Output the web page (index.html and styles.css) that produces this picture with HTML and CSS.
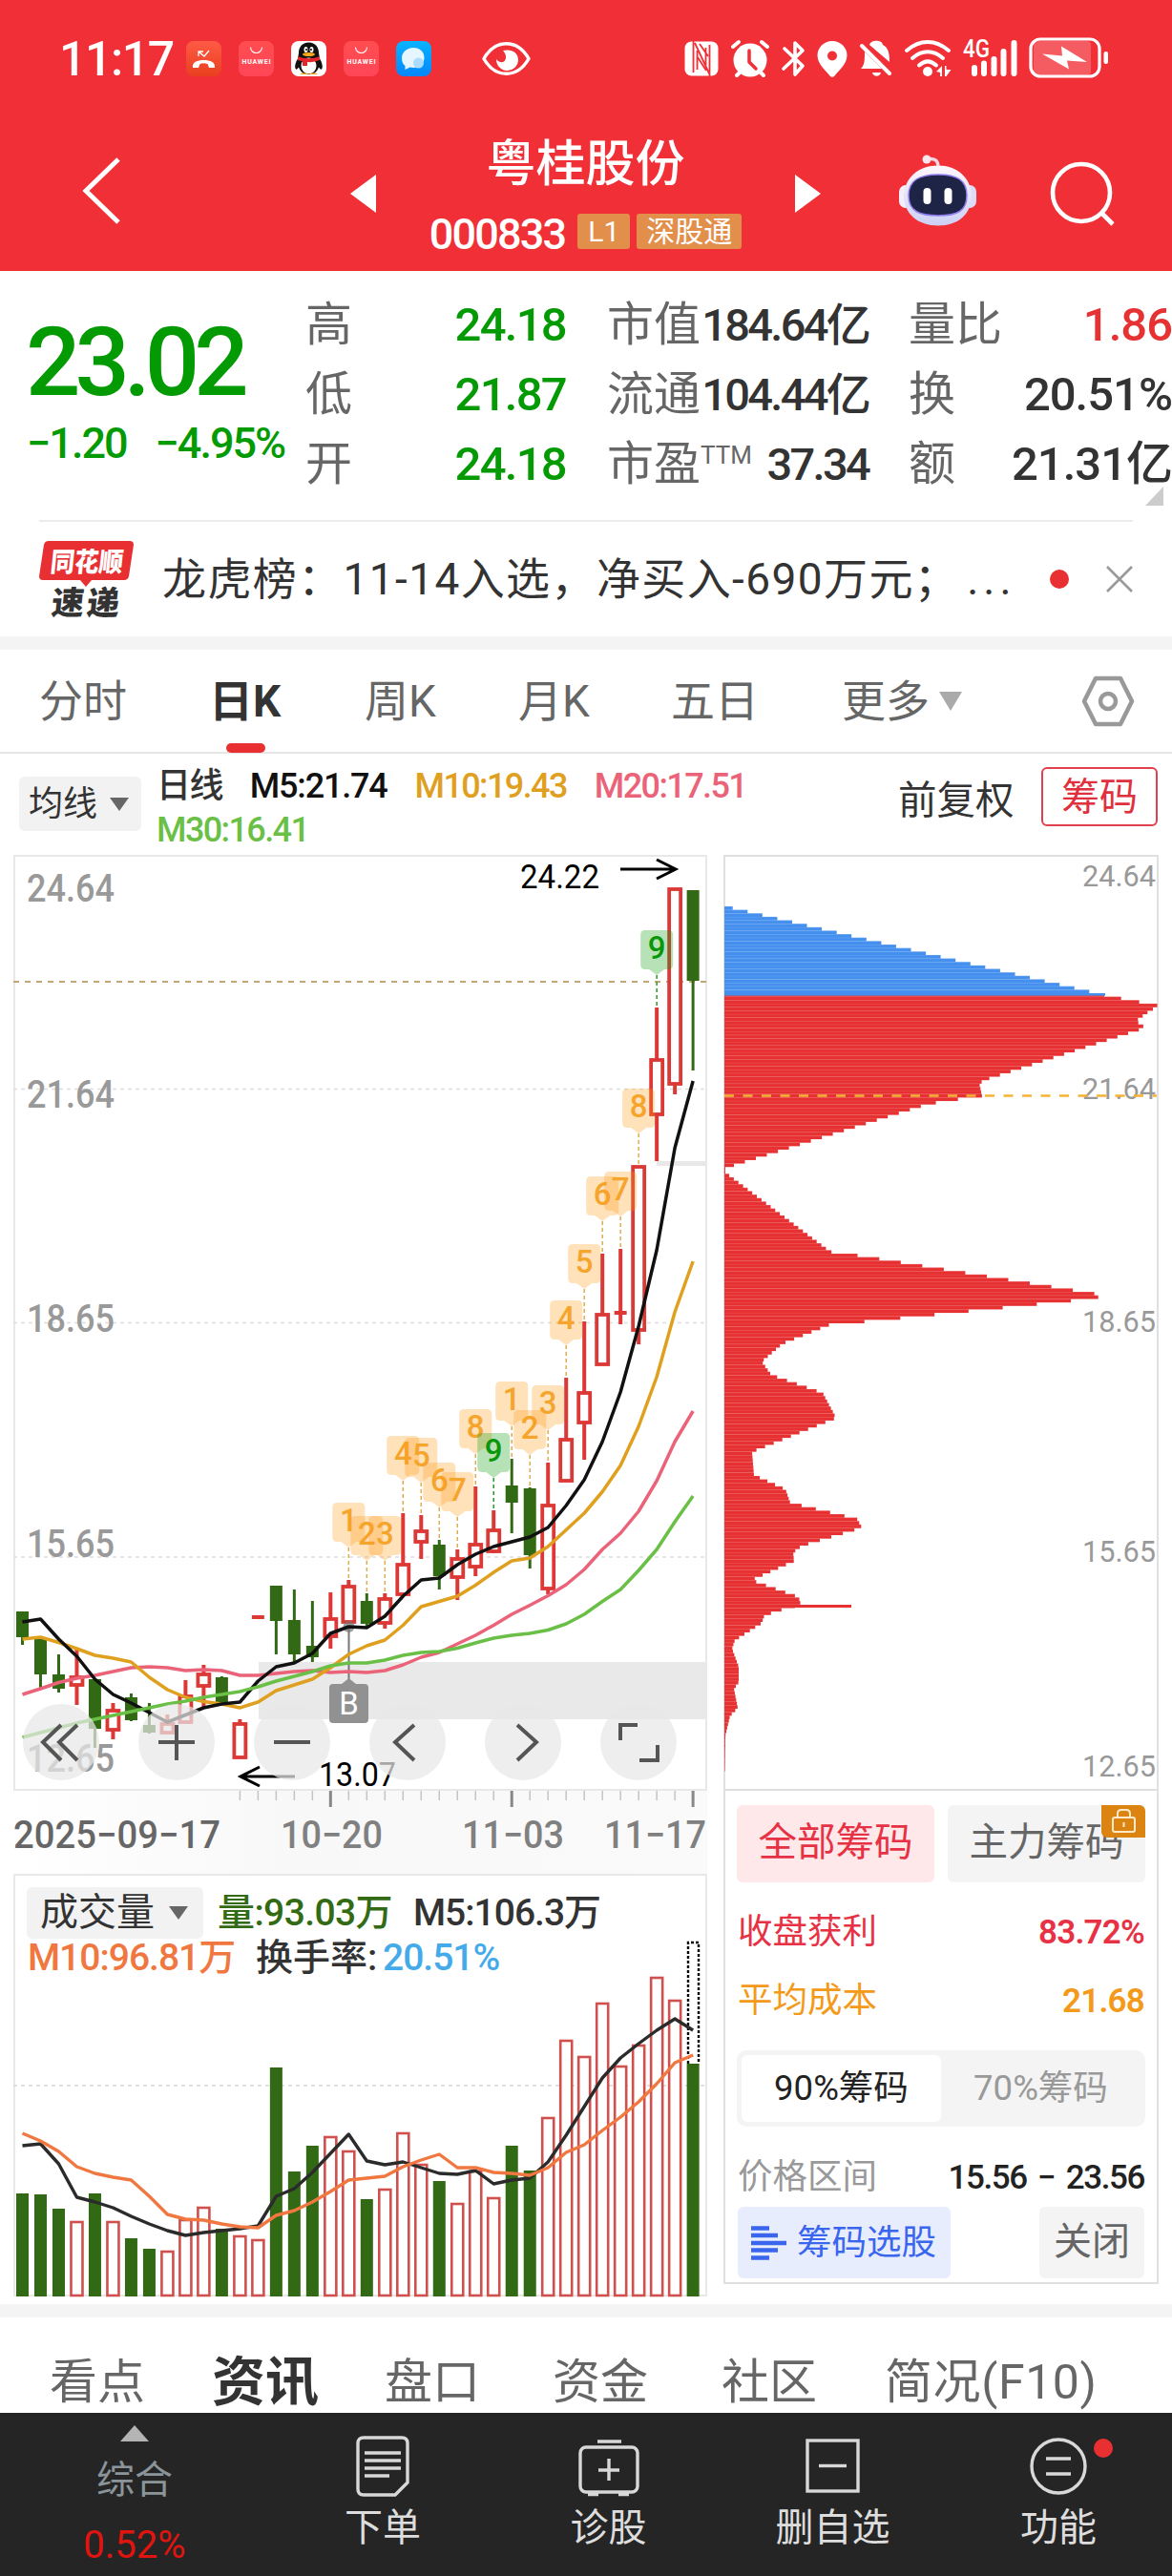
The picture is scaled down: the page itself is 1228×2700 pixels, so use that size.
FILE: index.html
```html
<!DOCTYPE html>
<html lang="zh-CN">
<head>
    <meta charset="UTF-8">
    <meta name="viewport" content="width=device-width, initial-scale=1.0">
    <title>粤桂股份 000833</title>
    <link rel="stylesheet" href="styles.css">
</head>
<body>
    <header class="header">
        <!-- Status bar -->
        <div class="status">
            <span class="clock">11:17</span>
            <svg class="status-left" width="362" height="60" viewBox="194 30 362 60">
                <defs>
                    <linearGradient id="gCall" x1="0" y1="0" x2="0" y2="1"><stop offset="0" stop-color="#ff5a45"/><stop offset="1" stop-color="#e8401f"/></linearGradient>
                    <linearGradient id="gShop" x1="0" y1="0" x2="0" y2="1"><stop offset="0" stop-color="#ff4d50"/><stop offset="1" stop-color="#ff4658"/></linearGradient>
                    <linearGradient id="gChat" x1="0" y1="0" x2="0" y2="1"><stop offset="0" stop-color="#08b4ff"/><stop offset="1" stop-color="#0586fb"/></linearGradient>
                </defs>
                <rect x="195" y="43" width="37" height="37" rx="8" fill="url(#gCall)"/>
                <path d="M202 71c-1-6 5-8 11.500-8s12.500 2 11.500 8h-6l-1.500-4c-3-1-6-1-8 0l-1.500 4z" fill="#fff"/>
                <path d="M208 59v-5h5M208 54l6 5 5-6" fill="none" stroke="#fff" stroke-width="1.300"/>
                <g id="shop">
                    <rect x="250" y="43" width="37" height="37" rx="8" fill="url(#gShop)"/>
                    <path d="M262.500 49.500a6 6 0 0 0 12 0" fill="none" stroke="#fff" stroke-width="1.100"/>
                    <text x="253.500" y="66.500" class="tiny" textLength="30">HUAWEI</text>
                </g>
                <use href="#shop" x="110"/>
                <rect x="305" y="43" width="37" height="37" rx="8" fill="#fff"/>
                <path d="M323.500 44.500c-7 0-10.500 5-10.500 11l-1 6c-3 5-3.500 9-2 11 1 .5 2-.5 3-2 2 5 5 7.500 10.500 7.500s8.500-2.500 10.500-7.500c1 1.500 2 2.500 3 2 1.500-2 1-6-2-11l-1-6c0-6-3.500-11-10.500-11z" fill="#111"/>
                <ellipse cx="323.500" cy="69" rx="8" ry="8.500" fill="#fff"/>
                <ellipse cx="320.500" cy="52" rx="2" ry="3" fill="#fff"/><ellipse cx="326.500" cy="52" rx="2" ry="3" fill="#fff"/>
                <circle cx="321" cy="52" r="1"/><circle cx="326" cy="52" r="1"/>
                <ellipse cx="323.500" cy="57" rx="6.500" ry="2" fill="#f7a81b"/>
                <path d="M312 59c7 3 16 3 23 0v4c-4 1.500-9 2.500-13 2v4h-5v-5c-3 0-5-1-5-1z" fill="#e4252b"/>
                <path d="M314 78a5 2.500 0 0 1 9 0zM324 78a5 2.500 0 0 1 9 0z" fill="#f7a81b"/>
                <rect x="415" y="43" width="37" height="37" rx="8" fill="url(#gChat)"/>
                <path d="M433 50c-7 0-12 5-12 11 0 4 1.500 6.500 3.500 8v4l5-2.500c10 2 15-4 15-10S440 50 433 50z" fill="#e6f6ff"/>
                <circle cx="438.500" cy="66" r="5.500" fill="#a9dcff"/>
                <path d="M507 61.500c12-21 35-21 47 0-12 21-35 21-47 0z" fill="none" stroke="#fff" stroke-width="3.500" stroke-linejoin="round"/>
                <path d="M527 53c9-2 16 2 16 10a11.500 11.500 0 0 1-23-1c4 5 9 4 10-1 .5-3-1-6-3-8z" fill="#fff"/>
            </svg>
            <svg class="status-right" width="450" height="60" viewBox="716 30 450 60" fill="#fff">
                <!-- NFC -->
                <rect x="717.500" y="43.500" width="35" height="36" rx="7"/>
                <path d="M726.500 43v33M743.500 47v33M728 45l15.500 33M730.500 53v20M739.500 50v20M731 60l9 14M733 46l9 13" fill="none" stroke="#f12f37" stroke-width="1.800"/>
                <!-- alarm -->
                <circle cx="786" cy="63" r="17.500"/>
                <path d="M768 49l6-5M804 49l-6-5M772 79l5-5M800 79l-5-5" stroke="#fff" stroke-width="4" stroke-linecap="round"/>
                <path d="M785 53v12l7 7" fill="none" stroke="#f12f37" stroke-width="3.500" stroke-linecap="round"/>
                <!-- bluetooth -->
                <path d="M822 51l19 18-8 9V45l8 8-20 19" fill="none" stroke="#fff" stroke-width="3.600" stroke-linecap="round" stroke-linejoin="round"/>
                <!-- location -->
                <path fill-rule="evenodd" d="M872 43c-9 0-15.500 7-15.500 15 0 9 8 15 13 21.500 1.500 1.800 3.500 1.800 5 0C879.500 73 887.500 67 887.500 58c0-8-6.500-15-15.500-15zm0 10.500a5 5 0 1 1 0 10 5 5 0 0 1 0-10z"/>
                <!-- muted bell -->
                <path d="M911 47c1-5 13-6 14 0 6 3 7 9 7 18zM906 54l18 18h-22c4-4 4-9 4-18zM914 76h9c-1 5-8 5-9 0z"/>
                <path d="M903 48l29 29" stroke="#fff" stroke-width="4" stroke-linecap="round"/>
                <!-- wifi -->
                <path d="M950 53c14-12 30-12 44 0M956 61c10-9 22-9 32 0M963 68.500c6-5.500 12-5.500 18 0" fill="none" stroke="#fff" stroke-width="4" stroke-linecap="round"/>
                <circle cx="972" cy="75" r="5"/>
                <path d="M981 75l6-6v11h-2v-4zM990 69h1.500v4h5l-5 7H990z"/>
                <!-- signal -->
                <text x="1009" y="60" class="net" textLength="28" lengthAdjust="spacingAndGlyphs">4G</text>
                <path d="M1021 71v6M1031 66.500v10.500M1041.500 62v15M1051.500 54v23M1062.500 45v32" stroke="#fff" stroke-width="6" stroke-linecap="round"/>
                <!-- battery -->
                <rect x="1083" y="43" width="60" height="36" rx="4" opacity=".22"/>
                <rect x="1080" y="41" width="72" height="39" rx="10" fill="none" stroke="#fff" stroke-width="3.200"/>
                <rect x="1156.500" y="54" width="4.500" height="13" rx="2"/>
                <path d="M1092 56.500l21 2-1-10 27 16.500-21-1.500 2 9z"/>
            </svg>
        </div>
        <!-- Title bar -->
        <div class="titlebar">
            <svg class="back" width="48" height="76" viewBox="0 0 48 76"><path d="M42 4L8 37l34 33" fill="none" stroke="#fff" stroke-width="5"/></svg>
            <svg class="prev" width="27" height="40" viewBox="0 0 27 40"><path d="M27 0v40L0 20z" fill="#fff"/></svg>
            <div class="stock">
                <h1>粤桂股份</h1>
                <div class="code"><span>000833</span><em class="l1">L1</em><em>深股通</em></div>
            </div>
            <svg class="next" width="27" height="40" viewBox="0 0 27 40"><path d="M0 0v40l27-20z" fill="#fff"/></svg>
            <svg class="robot" width="84" height="78" viewBox="940 160 84 78">
                <defs>
                    <linearGradient id="gBot" x1="0" y1="0" x2="0" y2="1"><stop offset="0" stop-color="#fdf7fc"/><stop offset="1" stop-color="#cdd0f4"/></linearGradient>
                </defs>
                <path d="M971 167c8-2 12 1 12 8" fill="none" stroke="#f6d6e2" stroke-width="3.500"/>
                <circle cx="971" cy="167" r="4.500" fill="#fbe6ee"/>
                <rect x="942" y="194" width="14" height="24" rx="7" fill="#f3f0fb"/><rect x="1009" y="194" width="14" height="24" rx="7" fill="#dcdcf8"/>
                <path d="M983 173.500c20 0 34 13 35 31 0 20-14 32-35 32s-36-12-36-32c1-18 15-31 36-31z" fill="url(#gBot)"/>
                <path d="M983 183c20 0 30 6 30 22s-10 21-30 21-31-5-31-21 11-22 31-22z" fill="#1e2446" stroke="#8f7bf0" stroke-width="1.500"/>
                <rect x="967.500" y="197" width="8" height="17" rx="4" fill="#fff"/><rect x="989.500" y="197" width="8" height="17" rx="4" fill="#fff"/>
            </svg>
            <svg class="search" width="70" height="70" viewBox="0 0 70 70"><g fill="none" stroke="#fff" stroke-width="4.600"><circle cx="33" cy="33" r="30"/><path d="M54 54l12 12"/></g></svg>
        </div>
    </header>

    <!-- Quote -->
    <section class="quote">
        <div class="price">
            <strong>23.02</strong>
            <div class="change"><span>−1.20</span><span class="pct">−4.95%</span></div>
        </div>
        <dl class="q1">
            <dt>高</dt><dd class="green">24.18</dd>
            <dt>低</dt><dd class="green">21.87</dd>
            <dt>开</dt><dd class="green">24.18</dd>
        </dl>
        <dl class="q2">
            <dt>市值</dt><dd>184.64亿</dd>
            <dt>流通</dt><dd>104.44亿</dd>
            <dt>市盈<sup>TTM</sup></dt><dd>37.34</dd>
        </dl>
        <dl class="q3">
            <dt>量比</dt><dd class="red">1.86</dd>
            <dt>换</dt><dd>20.51%</dd>
            <dt>额</dt><dd>21.31亿</dd>
        </dl>
        <i class="corner"></i>
    </section>

    <!-- News strip -->
    <section class="news">
        <svg width="100" height="82" viewBox="42 564 100 82">
            <path d="M52 565h85q4 0 4 4l-5 33q-1 4-5 4h-34l-6 7-6-7H46q-4 0-4-4l5-33q1-4 5-4z" fill="#e83033"/>
            <text x="0" y="0" class="logo-top" transform="translate(53 597) skewX(-6)" textLength="76" lengthAdjust="spacingAndGlyphs">同花顺</text>
            <text x="0" y="0" class="logo-bottom" transform="translate(54 642) skewX(-6)" textLength="71">速递</text>
        </svg>
        <p>龙虎榜：11-14入选，净买入-690万元；<span>...</span></p>
        <i class="dot"></i>
        <svg class="close" width="28" height="28" viewBox="0 0 28 28"><path d="M1 1l26 26M27 1L1 27" stroke="#999" stroke-width="2.600"/></svg>
    </section>

    <!-- Period tabs -->
    <nav class="periods">
        <a>分时</a><a class="active">日K</a><a>周K</a><a>月K</a><a>五日</a><a>更多<i class="down"></i></a>
        <svg width="56" height="54" viewBox="0 0 56 54"><g fill="none" stroke="#999" stroke-width="4.500"><path d="M15 3h26l12 24-12 24H15L3 27z" stroke-linejoin="round"/><circle cx="28" cy="27" r="8"/></g></svg>
    </nav>

    <!-- Moving averages -->
    <div class="averages">
        <span class="select">均线<i class="down"></i></span>
        <div class="values">
            <span>日线</span><span class="m5">M5:21.74</span><span class="m10">M10:19.43</span><span class="m20">M20:17.51</span><br><span class="m30">M30:16.41</span>
        </div>
        <span class="adjust">前复权</span>
        <span class="chips-btn">筹码</span>
    </div>

    <main class="charts">
        <div class="left">
            <div class="kline">
                <svg id="kline" width="727" height="1068" viewBox="14 896 727 1068"></svg>
                <div class="controls">
                    <button><svg viewBox="0 0 80 80"><path d="M40 22L21 40l19 19M57 22L38 40l19 19"/></svg></button>
                    <button><svg viewBox="0 0 80 80"><path d="M21 40h38M40 22v37"/></svg></button>
                    <button><svg viewBox="0 0 80 80"><path d="M21 40h38"/></svg></button>
                    <button><svg viewBox="0 0 80 80"><path d="M47 22L27 40l20 19"/></svg></button>
                    <button><svg viewBox="0 0 80 80"><path d="M34 22l20 18-20 19"/></svg></button>
                    <button><svg viewBox="0 0 80 80"><path d="M21 38V22h18M60 43v16H41"/></svg></button>
                </div>
            </div>
            <div class="volume">
                <svg id="volume" width="727" height="443" viewBox="14 1964 727 443"></svg>
                <div class="legend">
                    <div><span class="select">成交量<i class="down"></i></span><span class="vol">量:93.03万</span><span class="v5">M5:106.3万</span></div>
                    <div><span class="v10">M10:96.81万</span><span class="rate">换手率:</span><span class="blue">20.51%</span></div>
                </div>
            </div>
        </div>

        <aside class="chips">
            <svg id="chips" width="456" height="979" viewBox="758 896 456 979"></svg>
            <div class="chips-info">
                <div class="pair">
                    <span class="on">全部筹码</span>
                    <span>主力筹码
                        <svg class="lock" width="46" height="34" viewBox="0 0 46 34"><g fill="none" stroke="#fde9c8" stroke-width="2"><rect x="12" y="13" width="23" height="15" rx="2"/><path d="M17 13V9q0-4 4-4h5q4 0 4 4v4M23.500 18v5"/></g></svg>
                    </span>
                </div>
                <div class="row r1"><span>收盘获利</span><b>83.72%</b></div>
                <div class="row r2"><span>平均成本</span><b>21.68</b></div>
                <div class="segment"><span class="on">90%筹码</span><span>70%筹码</span></div>
                <div class="row r3"><span>价格区间</span><b>15.56 − 23.56</b></div>
                <div class="foot">
                    <span class="pick"><svg width="38" height="36" viewBox="0 0 38 36"><path d="M0 2.500h19M0 10h28M0 18h37M0 25.500h28M0 33.500h19" stroke="#3a66ee" stroke-width="4.600"/></svg>筹码选股</span>
                    <span class="shut">关闭</span>
                </div>
            </div>
        </aside>
    </main>

    <!-- Content tabs -->
    <nav class="sections">
        <a>看点</a><a class="active">资讯</a><a>盘口</a><a>资金</a><a>社区</a><a class="last">简况(F10)</a>
    </nav>

    <!-- Bottom bar -->
    <footer class="bottom">
        <div class="index"><i class="up"></i><span>综合</span><b>0.52%</b></div>
        <div>
            <svg width="64" height="64" viewBox="0 0 64 64"><g><path d="M12 2h40q6 0 6 6v41L45 62H12q-6 0-6-6V8q0-6 6-6z"/><path d="M13 18h38M13 26h38M13 34h38M13 42h26"/></g></svg>
            <span>下单</span>
        </div>
        <div>
            <svg width="64" height="64" viewBox="0 0 64 64"><g><rect x="2" y="12" width="60" height="47" rx="6"/><path d="M20 6h25M32 24v23M21 36h22M10 61.500h11M42 61.500h11"/></g></svg>
            <span>诊股</span>
        </div>
        <div>
            <svg width="64" height="64" viewBox="0 0 64 64"><g><rect x="5" y="5" width="53" height="53"/><path d="M17 31.500h29"/></g></svg>
            <span>删自选</span>
        </div>
        <div class="more">
            <svg width="64" height="64" viewBox="0 0 64 64"><g><circle cx="32" cy="32" r="28"/><path d="M19 24h26M19 40h26"/></g></svg>
            <span>功能</span>
            <i class="dot"></i>
        </div>
    </footer>
    <script src="charts.js"></script>
</body>
</html>
```

FILE: styles.css
```css
* {
    box-sizing: border-box;
}
body {
    margin: 0;
    width: 1228px;
    height: 2700px;
    overflow: hidden;
    background: #fff;
    color: #333;
    font-family: Roboto, "Noto Sans CJK SC", sans-serif;
    line-height: 1;
}
h1, p, dl, dd, dt {
    margin: 0;
    font-weight: 400;
}
em, i {
    font-style: normal;
}
svg {
    display: block;
    overflow: visible;
}
.green { color: #049a04; }
.red { color: #e63232; }
.blue { color: #45aaea; }

/* triangles */
.down {
    display: inline-block;
    border: 10px solid transparent;
    border-top: 14px solid #666;
    border-bottom: 0;
}

/* header */
.header {
    height: 284px;
    background: #f12f37;
    color: #fff;
}
.status {
    display: flex;
    height: 90px;
    padding: 30px 62px 0 62px;
}
.clock {
    width: 132px;
    padding-top: 7px;
    font-size: 50px;
    font-weight: 500;
    letter-spacing: -1.400px;
}
.status-right {
    margin-left: auto;
}
.tiny {
    font-size: 7px;
    font-weight: 700;
    fill: #fff;
}
.net {
    font-size: 25px;
    font-weight: 500;
}
.titlebar {
    display: flex;
    height: 194px;
}
.titlebar svg {
    flex: none;
}
.back {
    margin: 73px 0 0 82px;
}
.prev {
    margin: 93px 0 0 237px;
}
.stock {
    width: 439px;
    padding-top: 57px;
    text-align: center;
}
.stock h1 {
    font-size: 52px;
    font-weight: 500;
}
.code {
    display: flex;
    justify-content: center;
    gap: 7px;
    margin: 24px 0 0 0;
    font-size: 45px;
    font-weight: 500;
}
.code span {
    margin-right: 6px;
    letter-spacing: -1.800px;
}
.code em {
    height: 37px;
    margin-top: 1px;
    padding: 2px 10px;
    border-radius: 3px;
    background: #e38f4c;
    font-size: 30px;
    font-weight: 400;
    line-height: 34px;
}
.code .l1 {
    padding: 2px 11px;
}
.next {
    margin: 93px 0 0 0;
}
.robot {
    margin: 70px 0 0 80px;
}
.search {
    margin: 79px 0 0 76px;
}

/* quote */
.quote {
    position: relative;
    display: flex;
    height: 261px;
    padding: 20px 0 0 31px;
}
.price {
    width: 289px;
    color: #049a04;
}
.price strong {
    display: block;
    margin: 25px 0 0 -4px;
    font-size: 101px;
    font-weight: 500;
    letter-spacing: -6px;
}
.change {
    display: flex;
    margin: 12px 0 0 -3px;
    font-size: 45px;
    font-weight: 500;
    letter-spacing: -2px;
}
.pct {
    margin-left: 30px;
}
.quote dl {
    display: grid;
    grid-template-columns: 96px 1fr;
    grid-auto-rows: 73px;
    align-items: center;
    font-size: 49px;
}
.quote dt {
    color: #666;
    white-space: nowrap;
}
.quote dd {
    font-size: 49px;
    font-weight: 500;
    text-align: right;
    letter-spacing: -1.700px;
    white-space: nowrap;
}
.q1 {
    width: 273px;
}
.q2 {
    width: 274px;
    margin-left: 43px;
}
.q3 {
    width: 276px;
    margin-left: 42px;
}
.quote .q2 dd {
    font-size: 47px;
    letter-spacing: -2.700px;
}
.quote .q3 dd {
    letter-spacing: -1px;
}
.quote sup {
    font-size: 26px;
    vertical-align: 17px;
    line-height: 0;
}
.corner {
    position: absolute;
    right: 9px;
    bottom: 15px;
    border-left: 19px solid transparent;
    border-bottom: 20px solid #ccc;
}

/* news */
.news {
    display: flex;
    align-items: center;
    height: 122px;
    margin: 0 41px;
    border-top: 2px solid #ececec;
}
.news p {
    width: 913px;
    margin-left: 29px;
    font-size: 46px;
    letter-spacing: 1.400px;
    white-space: nowrap;
}
.news p span {
    margin-left: 8px;
    letter-spacing: 5px;
}
.news .dot {
    margin-left: 17px;
}
.news .close {
    margin-left: auto;
}
.dot {
    width: 20px;
    height: 20px;
    border-radius: 50%;
    background: #e83033;
}
.logo-top {
    font-size: 28px;
    font-weight: 900;
    fill: #fff;
}
.logo-bottom {
    font-size: 34px;
    font-weight: 900;
    fill: #333;
}

/* period tabs */
.periods {
    display: grid;
    grid-template-columns: 178px 163px 161px 160px 179px 251px 56px;
    align-items: center;
    height: 123px;
    padding-left: 41px;
    border-top: 14px solid #f4f4f4;
    border-bottom: 2px solid #e6e6e6;
    color: #666;
    font-size: 46px;
}
.periods a {
    position: relative;
}
.periods .active {
    color: #333;
    font-weight: 700;
}
.periods .active::after {
    content: "";
    position: absolute;
    left: 18px;
    top: 67px;
    width: 41px;
    height: 10px;
    border-radius: 5px;
    background: #e83033;
}
.periods .down {
    margin: 0 0 6px 10px;
    border-width: 20px 12px 0;
    border-top-color: #aaa;
}

/* moving averages */
.averages {
    display: flex;
    height: 106px;
    padding: 14px 14px 0 20px;
    font-size: 36px;
}
.select {
    display: inline-flex;
    align-items: center;
    justify-content: space-between;
    border-radius: 6px;
    background: #f2f2f2;
}
.averages .select {
    width: 128px;
    height: 57px;
    margin-top: 10px;
    padding: 0 13px 0 10px;
}
.values {
    width: 722px;
    margin-left: 16px;
    font-size: 36px;
    font-weight: 500;
    line-height: 46px;
    margin-top: -3px;
}
.values span {
    margin-right: 29px;
    letter-spacing: -1.600px;
}
.values .m5 {
    letter-spacing: -1.200px;
}
.m5 { color: #111; }
.m10 { color: #e0a01f; }
.m20 { color: #ea6379; }
.m30 { color: #6abf47; }
.adjust {
    width: 150px;
    margin: 15px 0 0 55px;
    font-size: 40.500px;
}
.chips-btn {
    width: 122px;
    height: 62px;
    border: 2px solid #e0404d;
    border-radius: 6px;
    color: #e0303d;
    font-size: 40px;
    line-height: 59px;
    text-align: center;
}

/* charts */
.charts {
    display: grid;
    grid-template-columns: 727px 456px;
    gap: 17px;
    height: 1519px;
    padding: 0 14px;
}
.kline {
    position: relative;
    height: 1068px;
}
.controls {
    position: absolute;
    left: 10px;
    top: 890px;
    display: flex;
    gap: 41px;
}
.controls button {
    width: 80px;
    height: 80px;
    padding: 0;
    border: 0;
    border-radius: 50%;
    background: rgba(232, 232, 232, .72);
}
.controls path {
    fill: none;
    stroke: #555;
    stroke-width: 4;
}
.axis-label {
    font-size: 40px;
    font-weight: 500;
    fill: #999;
}
.date {
    font-size: 40px;
    font-weight: 500;
    fill: #808080;
}
.mark {
    font-size: 35px;
    fill: #000;
}
.tag {
    font-size: 33px;
    font-weight: 500;
    text-anchor: middle;
}
.chip-label {
    font-size: 31px;
    fill: #999;
}
.volume {
    position: relative;
}
.legend {
    position: absolute;
    left: 14px;
    top: 14px;
    font-size: 39px;
    font-weight: 500;
    white-space: nowrap;
}
.legend > div {
    display: flex;
    align-items: center;
    height: 54px;
}
.legend > div + div {
    height: 40px;
    padding-left: 1px;
}
.legend .select {
    width: 185px;
    height: 54px;
    padding: 0 16px 0 14px;
    font-size: 40px;
    font-weight: 400;
}
.vol {
    width: 205px;
    margin-left: 15px;
    color: #336a14;
    letter-spacing: -.6px;
}
.v5 {
    letter-spacing: -1px;
}
.v10 {
    width: 239px;
    color: #f07840;
    letter-spacing: -1px;
}
.rate {
    width: 133px;
}
.legend .blue {
    letter-spacing: -1px;
}

/* chip panel */
.chips {
    height: 1498px;
    border-bottom: 2px solid #e0e0e0;
}
.chips-info {
    height: 518px;
    padding: 15px 12px 0;
    border: 2px solid #e0e0e0;
    border-bottom: 0;
    font-size: 36.500px;
}
.pair {
    display: flex;
    gap: 14px;
}
.pair > span {
    position: relative;
    width: 207px;
    height: 81px;
    border-radius: 6px;
    background: #f4f4f4;
    color: #666;
    font-size: 40.500px;
    line-height: 79px;
    text-align: center;
}
.pair .on {
    background: #ffe8ea;
    color: #e63244;
}
.lock {
    position: absolute;
    right: 0;
    top: 0;
    border-radius: 0 6px 0 6px;
    background: #db8411;
}
.row {
    display: flex;
    justify-content: space-between;
    align-items: center;
    height: 72px;
    padding: 0 1px;
}
.row b {
    font-size: 35px;
    font-weight: 600;
    letter-spacing: -.8px;
}
.r1 {
    margin-top: 16px;
    color: #e63244;
}
.r2 {
    color: #f39a1a;
}
.segment {
    display: flex;
    height: 80px;
    margin-top: 16px;
    padding: 5px;
    border-radius: 10px;
    background: #f4f4f4;
    color: #999;
}
.segment span {
    width: 209px;
    border-radius: 6px;
    line-height: 70px;
    text-align: center;
}
.segment .on {
    background: #fff;
    color: #222;
}
.r3 {
    height: 84px;
    padding-top: 22px;
    color: #999;
}
.r3 b {
    color: #222;
    font-weight: 500;
    letter-spacing: -1.400px;
    word-spacing: 4px;
}
.foot {
    display: flex;
    justify-content: space-between;
    padding: 0 1px;
}
.foot span {
    height: 75px;
    border-radius: 6px;
    line-height: 73px;
}
.pick {
    display: flex;
    align-items: center;
    gap: 10px;
    width: 223px;
    padding-left: 14px;
    background: #e8edfe;
    color: #3a66ee;
}
.shut {
    width: 110px;
    background: #f4f4f4;
    color: #666;
    font-size: 40px;
    text-align: center;
}

/* content tabs */
.sections {
    display: grid;
    grid-template-columns: 170px 181px 176px 177px 171px auto;
    align-items: center;
    height: 114px;
    padding: 36px 0 0 52px;
    border-top: 14px solid #f4f4f4;
    color: #666;
    font-size: 50px;
}
.sections .active {
    color: #333;
    font-size: 56px;
    font-weight: 700;
}
.sections .last {
    letter-spacing: .6px;
}

/* bottom bar */
.bottom {
    display: grid;
    grid-template-columns: 282px 238px 235px 235px 238px;
    height: 172px;
    background: #252525;
    color: #ddd;
    font-size: 40px;
}
.bottom > div {
    position: relative;
    display: flex;
    flex-direction: column;
    align-items: center;
    padding-top: 24px;
}
.bottom svg g {
    fill: none;
    stroke: #d8d8d8;
    stroke-width: 3.400;
}
.bottom span {
    margin-top: 13px;
}
.bottom .index {
    padding: 13px 0 0;
    color: #8b9499;
}
.bottom .index span {
    margin-top: 21px;
}
.up {
    border: 15px solid transparent;
    border-top: 0;
    border-bottom: 17px solid #b4b4b4;
}
.index b {
    margin-top: 28px;
    color: #e0150f;
    font-weight: 400;
}
.more .dot {
    position: absolute;
    left: 156px;
    top: 27px;
}
```

FILE: charts.js
```js
// Candles: [open/close top, body bottom, high, low, up?]
const candles = [
    [1689, 1716, 1689, 1724, 0], [1717, 1755, 1717, 1769, 0], [1755, 1770, 1734, 1774, 0], [1757, 1766, 1729, 1787, 1],
    [1760, 1812, 1760, 1832, 0], [1792, 1813, 1785, 1823, 1], [1779, 1803, 1775, 1804, 0], [1808, 1816, 1785, 1817, 0],
    [1806, 1816, 1797, 1816, 1], [1777, 1805, 1761, 1805, 1], [1754, 1767, 1745, 1789, 1], [1758, 1784, 1757, 1788, 0],
    [1806, 1842, 1802, 1842, 1], [1695, 1695, 1695, 1695, 1], [1662, 1699, 1662, 1734, 0], [1698, 1734, 1666, 1742, 0],
    [1725, 1737, 1678, 1742, 0], [1696, 1715, 1669, 1728, 1], [1662, 1700, 1656, 1702, 1], [1678, 1702, 1670, 1707, 0],
    [1675, 1701, 1670, 1707, 1], [1639, 1671, 1586, 1671, 1], [1604, 1616, 1588, 1634, 1], [1619, 1652, 1614, 1666, 0],
    [1633, 1653, 1624, 1677, 1], [1618, 1642, 1558, 1652, 1], [1603, 1626, 1583, 1628, 1], [1557, 1575, 1529, 1607, 0],
    [1560, 1630, 1559, 1644, 0], [1577, 1665, 1533, 1671, 1], [1508, 1552, 1444, 1552, 1], [1459, 1491, 1385, 1530, 1],
    [1377, 1430, 1314, 1430, 1], [1376, 1376, 1309, 1388, 1], [1222, 1394, 1222, 1409, 1], [1110, 1168, 1056, 1217, 1],
    [931, 1136, 931, 1147, 1], [933, 1028, 933, 1122, 0]
];
const averages = {
    '#ea6379': [1776, 1770, 1763.5, 1759, 1756, 1752, 1748, 1747, 1748, 1751, 1750, 1751, 1756, 1756, 1754, 1752, 1751, 1753, 1752, 1753, 1751, 1745, 1737, 1732, 1723, 1714, 1703.5, 1692, 1682.5, 1672.5, 1661, 1645, 1624, 1607, 1584, 1552, 1511, 1479],
    '#e0a01f': [1718, 1716, 1721.5, 1728, 1735, 1738, 1742, 1758, 1771, 1779, 1783.5, 1786, 1790, 1784, 1772, 1766, 1760, 1748, 1734, 1725, 1719, 1703.5, 1684, 1678.5, 1673, 1661.5, 1648, 1636, 1633, 1621, 1603.5, 1586, 1563.5, 1536, 1495, 1443, 1375, 1322],
    '#111': [1700, 1697, 1718, 1736, 1760, 1776, 1785, 1795, 1805, 1797.5, 1790, 1786, 1784, 1762, 1747, 1743, 1733, 1712, 1705, 1706, 1694, 1673, 1656, 1654, 1640, 1629, 1621, 1616, 1611, 1601, 1578, 1551, 1511, 1459, 1390, 1310, 1203, 1133],
    '#6abf47': [1821, 1816, 1811, 1806, 1802, 1798, 1794, 1790, 1786, 1783, 1779, 1776, 1773, 1768, 1762, 1757, 1752, 1746, 1743, 1743, 1740, 1735, 1732, 1731, 1727.5, 1722, 1717, 1714, 1712, 1708.5, 1702, 1692, 1678.5, 1666, 1646, 1624, 1595, 1568]
};
const tags = { 18: 1, 19: 2, 20: 3, 21: 4, 22: 5, 23: 6, 24: 7, 25: 8, 26: 9, 27: 1, 28: 2, 29: 3, 30: 4, 31: 5, 32: 6, 33: 7, 34: 8, 35: 9 };

const volumes = [2299, 2300, 2315, 2329, 2299, 2329, 2346, 2357, 2360, 2327, 2314, 2336, 2344, 2348, 2167, 2276, 2249, 2240, 2255, 2305, 2295, 2236, 2269, 2286, 2310, 2276, 2304, 2249, 2275, 2220, 2139, 2156, 2100, 2166, 2144, 2073, 2097, 2163];
const volumeAverages = {
    '#2b2b2b': [2249, 2247, 2268, 2303, 2308, 2314, 2323, 2331, 2338, 2343, 2340, 2338, 2336, 2333, 2302, 2294, 2277, 2257, 2237, 2265, 2269, 2266, 2272, 2278, 2279, 2275, 2289, 2285, 2283, 2266, 2238, 2208, 2178, 2157, 2142, 2128, 2116, 2128],
    '#f07840': [2236, 2244, 2255, 2271, 2278, 2282, 2285, 2302, 2321, 2326, 2327, 2331, 2334, 2335, 2322, 2317, 2308, 2297, 2285, 2283, 2281, 2271, 2264, 2258, 2272, 2272, 2277, 2278, 2280, 2272, 2256, 2248, 2233, 2219, 2203, 2184, 2162, 2154]
};

// Chip distribution: [y, x of the right end]
const chips = [
    [950, 760], [1044, 1162], [1054, 1214], [1059, 1205], [1070, 1190], [1077, 1200], [1130, 1037], [1135, 1026], [1149, 1029],
    [1151, 1010], [1157, 972], [1224, 760], [1229, 760], [1312, 870], [1316, 900], [1358, 1160], [1361.5, 1138], [1384, 917],
    [1388, 870], [1408, 820], [1427, 798], [1441, 808], [1460, 862], [1486, 876], [1521.5, 788], [1546, 790], [1561, 823],
    [1575, 828], [1592, 898], [1601, 903], [1620, 840], [1627, 831], [1636, 832], [1656, 787], [1674, 837], [1682, 839],
    [1686, 822], [1693, 801], [1701, 798], [1719, 770], [1728, 767], [1747, 774], [1763, 774], [1770, 769], [1790, 773],
    [1798, 765], [1819, 760], [1853, 759.5]
];

const RED = '#db3836';
const GREEN = '#316914';
const px = i => 23.5 + i * 18.99;
const rect = (x, y, w, h, attrs) => `<rect x="${x}" y="${y}" width="${w}" height="${h}" ${attrs}/>`;
const line = (x1, y1, x2, y2, color, w, dash) =>
    `<line x1="${x1}" y1="${y1}" x2="${x2}" y2="${y2}" stroke="${color}" stroke-width="${w}" ${dash ? `stroke-dasharray="${dash}"` : ''}/>`;
const text = (x, y, str, cls, len, attrs = '') =>
    `<text x="${x}" y="${y}" class="${cls}" ${len ? `textLength="${len}" lengthAdjust="spacingAndGlyphs"` : ''} ${attrs}>${str}</text>`;
const poly = (ys, color, w) =>
    `<polyline points="${ys.map((y, i) => px(i) + ',' + y).join(' ')}" fill="none" stroke="${color}" stroke-width="${w}" stroke-linejoin="round"/>`;

function drawKline() {
    let s = '<defs><linearGradient id="axisBg" x1="0" y1="0" x2="1" y2="0"><stop offset="0" stop-color="#fff"/><stop offset=".4" stop-color="#f8f8f8"/><stop offset="1" stop-color="#fafafa"/></linearGradient></defs>';
    s += rect(14, 1877, 727, 88, 'fill="url(#axisBg)"');
    s += rect(15, 897, 725, 979, 'fill="#fff" stroke="#e8e8e8" stroke-width="2"');
    [1141.5, 1386.5, 1632].forEach(y => s += line(14, y, 740, y, '#dedede', 1.5, '4 4'));
    s += line(14, 1029, 740, 1029, '#c2a676', 2, '6 6');
    // gaps
    s += rect(688, 1217, 52, 5, 'fill="#e8e8e8"') + rect(271, 1742, 469, 60, 'fill="#e9e9e9"');
    [[945, '24.64'], [1161, '21.64'], [1396, '18.65'], [1632, '15.65'], [1857, '12.65']]
        .forEach(([y, t]) => s += text(28, y, t, 'axis-label', 92));

    candles.forEach(([top, bottom, high, low, up], i) => {
        const x = px(i);
        const color = up ? RED : GREEN;
        if (top === bottom) {
            s += line(x - 6.5, top, x + 6.5, top, color, 4) + line(x, high, x, low, color, 4);
        } else if (up) {
            s += line(x, high, x, top, color, 4) + line(x, bottom, x, low, color, 4);
            s += rect(x - 6, top + 1, 12, bottom - top - 1, `fill="#fff" stroke="${color}" stroke-width="3.8"`);
        } else {
            s += line(x, high, x, low, color, 3) + rect(x - 6.5, top, 13, bottom - top, `fill="${color}"`);
        }
    });

    // buy marker
    s += '<circle cx="365.500" cy="1705" r="6" fill="#777" opacity=".7"/>' + line(365.5, 1705, 365.5, 1762, '#777', 2);
    s += '<path d="M349 1765h9l7.500-6 7.500 6h9q4 0 4 4v33q0 4-4 4h-33q-4 0-4-4v-33q0-4 4-4z" fill="#919191"/>';
    s += text(365.5, 1797, 'B', 'tag', 0, 'fill="#fff" style="font-weight:400"');

    for (const color in averages) s += poly(averages[color], color, 3.5);

    for (const i in tags) {
        const x = px(+i);
        const y = candles[i][2] - 81;
        const nine = tags[i] === 9;
        s += line(x, y + 47, x, y + 81, nine ? '#2a9a2a' : '#dcae50', 1.5, '4 3');
        s += `<path d="M${x - 12} ${y}h24q5 0 5 5v31q0 5-5 5h-4l-8 6-8-6h-4q-5 0-5-5v-31q0-5 5-5z" fill="${nine ? '#12a012' : '#ff9a1a'}" opacity=".3"/>`;
        s += text(x, y + 30, tags[i], 'tag', 0, `fill="${nine ? '#0a960a' : '#f5a42c'}"`);
    }

    s += text(545, 931, '24.22', 'mark', 83) + '<path d="M650 911h56M688 901l20 10-20 10" fill="none" stroke="#000" stroke-width="3"/>';
    s += text(334, 1872, '13.07', 'mark', 81) + '<path d="M309 1862h-56M272 1852l-20 10 20 10" fill="none" stroke="#000" stroke-width="3"/>';

    for (let i = 12; i < 38; i++) {
        const major = i % 10 === 7;
        s += line(px(i), 1877, px(i), major ? 1894 : 1887, major ? '#888' : '#c4c4c4', major ? 3 : 1.5);
    }
    s += text(14, 1937, '2025−09−17', 'date', 217, 'style="fill:#666"');
    s += text(294, 1937, '10−20', 'date', 107) + text(484, 1937, '11−03', 'date', 107) + text(633, 1937, '11−17', 'date', 107);
    document.getElementById('kline').innerHTML = s;
}

function drawVolume() {
    let s = rect(15, 1965, 725, 441, 'fill="#fff" stroke="#e8e8e8" stroke-width="2"');
    s += line(14, 2186, 740, 2186, '#d6d6d6', 1.5, '4 4');
    volumes.forEach((y, i) => {
        const x = px(i);
        s += candles[i][4]
            ? rect(x - 6, y, 12, 2406 - y, 'fill="#fff" stroke="#d0504e" stroke-width="2.6"')
            : rect(x - 6.5, y, 13, 2407 - y, `fill="${GREEN}"`);
    });
    // projected volume of the running day
    s += '<path d="M721 2163V2036h11V2163" fill="none" stroke="#000" stroke-width="2.4" stroke-dasharray="3 2"/>';
    for (const color in volumeAverages) s += poly(volumeAverages[color], color, 3.4);
    document.getElementById('volume').innerHTML = s;
}

function drawChips() {
    let s = rect(759, 897, 454, 979, 'fill="#fff" stroke="#e0e0e0" stroke-width="2"');
    const step = 3.64;
    let k = 0;
    for (let y = 950; y < 1853; y += step) {
        while (k < chips.length - 2 && chips[k + 1][0] < y + 1.8) k++;
        const [y0, x0] = chips[k];
        const [y1, x1] = chips[k + 1];
        const x = x0 + (x1 - x0) * Math.min(1, (y + 1.8 - y0) / (y1 - y0));
        s += rect(759, y.toFixed(2), (x - 759).toFixed(1), step + .2, `fill="${y < 1040 ? '#4590ee' : '#e73031'}"`);
        s += rect(759, y.toFixed(2), (x - 759).toFixed(1), .6, 'fill="#fff" opacity=".15"');
    }
    s += rect(759, 1041, 399, 2.6, 'fill="#4590ee"');
    s += rect(759, 1682, 133, 3, 'fill="#e73031"');
    [[929, '24.64'], [1152, '21.64'], [1396, '18.65'], [1637, '15.65'], [1862, '12.65']]
        .forEach(([y, t]) => s += text(1134, y, t, 'chip-label', 77));
    s += line(759, 1148.5, 1212, 1148.5, '#f5b333', 2.5, '10 9.5');
    document.getElementById('chips').innerHTML = s;
}

drawKline();
drawVolume();
drawChips();
```
